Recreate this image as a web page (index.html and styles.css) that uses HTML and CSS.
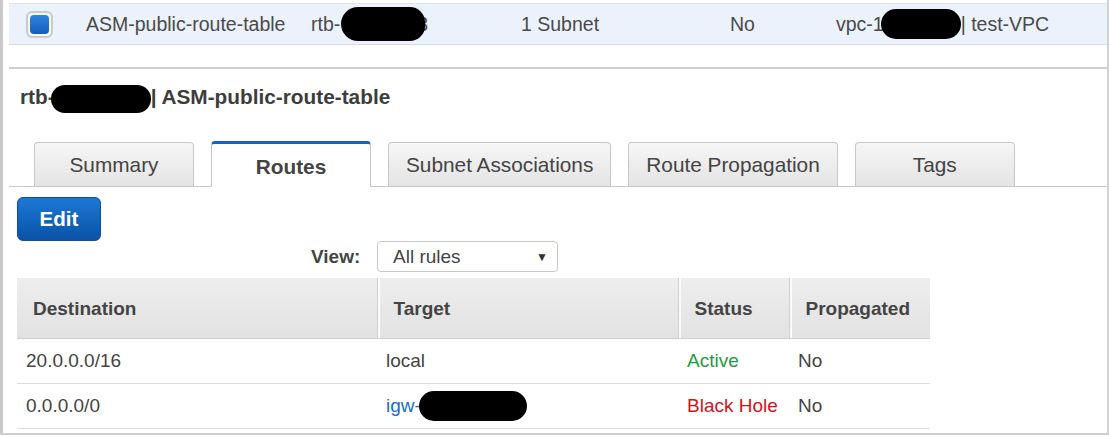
FILE: index.html
```html
<!DOCTYPE html>
<html>
<head>
<meta charset="utf-8">
<link rel="stylesheet" href="styles.css">
</head>
<body>
<div class="frame">
  <div class="list-row">
    <div class="cell cell-check"><span class="checkbox"><span class="checkbox-fill"></span></span></div>
    <div class="cell">ASM-public-route-table</div>
    <div class="cell">rtb-<span class="redact redact-rtb"></span><span class="peek">3</span></div>
    <div class="cell">1 Subnet</div>
    <div class="cell">No</div>
    <div class="cell">vpc-1<span class="redact redact-vpc"></span>| test-VPC</div>
  </div>
  <div class="splitter"></div>
  <section class="details">
    <h2 class="details-title">rtb-<span class="redact redact-title"></span>| ASM-public-route-table</h2>
    <div class="tabs">
      <div class="tab">Summary</div>
      <div class="tab tab-active">Routes</div>
      <div class="tab">Subnet Associations</div>
      <div class="tab">Route Propagation</div>
      <div class="tab">Tags</div>
    </div>
    <div class="actions"><button class="btn-edit">Edit</button></div>
    <div class="filter">
      <span class="filter-label">View:</span>
      <div class="select"><span>All rules</span><span class="caret">▼</span></div>
    </div>
    <table class="routes">
      <colgroup>
        <col class="col-dest"><col class="col-target"><col class="col-status"><col class="col-prop">
      </colgroup>
      <thead>
        <tr><th>Destination</th><th>Target</th><th>Status</th><th>Propagated</th></tr>
      </thead>
      <tbody>
        <tr><td>20.0.0.0/16</td><td>local</td><td class="ok">Active</td><td>No</td></tr>
        <tr><td>0.0.0.0/0</td><td><span class="link">igw-</span><span class="redact redact-igw"></span></td><td class="bad">Black Hole</td><td>No</td></tr>
      </tbody>
    </table>
  </section>
</div>
</body>
</html>
```
FILE: styles.css
```css
* { box-sizing: border-box; }
html, body { margin: 0; padding: 0; background: #fff; }
body {
  font-family: "Liberation Sans", Arial, sans-serif;
  color: #444;
  width: 1109px;
  height: 437px;
  overflow: hidden;
}
.frame {
  width: 1109px;
  height: 435px;
  border-left: 3px solid #c9c9c9;
  border-right: 2px solid #d2d2d2;
  border-bottom: 2px solid #cfcfcf;
  padding-left: 6px;
  padding-top: 3px;
}
.list-row {
  display: grid;
  grid-template-columns: 77px 225px 210px 209px 106px 1fr;
  height: 42px;
  background: #ebf2fc;
  border-top: 1px solid #dfe6ee;
  border-bottom: 1px solid #d6dce4;
  font-size: 19.5px;
  line-height: 40px;
  color: #4a4a4a;
  white-space: nowrap;
}
.cell { display: flex; align-items: center; }
.cell-check { padding-left: 17px; }
.checkbox {
  width: 27px; height: 27px;
  border: 2px solid #cacaca;
  border-radius: 6px;
  background: #f6f6f6;
  padding: 2px;
  display: block;
}
.checkbox-fill {
  display: block;
  width: 100%; height: 100%;
  border-radius: 4px;
  background: linear-gradient(#2f86de, #165dbb);
}
.redact {
  display: inline-block;
  background: #000;
  border-radius: 50%;
  vertical-align: middle;
}
.redact-rtb { width: 84px; height: 34px; margin-left: 1px; position: relative; z-index: 1; border-radius: 18px 16px 16px 18px; }
.peek { margin-left: -8px; }
.redact-vpc { width: 80px; height: 30px; margin-left: -3px; border-radius: 15px; }
.splitter { height: 2px; background: #cfcfcf; margin-top: 22px; }
.details-title {
  margin: 16px 0 0 11px;
  height: 24px;
  font-size: 20.8px;
  font-weight: bold;
  line-height: 24px;
  color: #3d3d3d;
  white-space: nowrap;
}
.redact-title { width: 100px; height: 28px; margin: -4px 0 -4px -4px; border-radius: 14px; }
.tabs {
  display: flex;
  align-items: flex-end;
  gap: 17px;
  padding-left: 25px;
  margin-top: 32px;
  border-bottom: 1px solid #c8c8c8;
}
.tab {
  min-width: 160px;
  height: 44px;
  padding: 0 17px;
  border: 1px solid #c8c8c8;
  border-bottom: none;
  border-radius: 4px 4px 0 0;
  background: linear-gradient(#f6f6f6, #e4e4e4);
  font-size: 20.8px;
  line-height: 43px;
  text-align: center;
  color: #444;
  white-space: nowrap;
}
.tab-active {
  height: 46px;
  margin-bottom: -1px;
  background: #fff;
  border-top: 3px solid #1565c0;
  font-weight: bold;
  line-height: 46px;
}
.actions { margin-top: 10px; padding-left: 8px; height: 44px; }
.btn-edit {
  width: 84px; height: 44px;
  border: 1px solid #0a4fa0;
  border-radius: 6px;
  background: linear-gradient(#1c78d6, #0a52a6);
  color: #fff;
  font-family: "Liberation Sans", Arial, sans-serif;
  font-size: 20.6px;
  font-weight: bold;
  padding: 0;
}
.filter {
  display: flex;
  align-items: center;
  height: 31px;
  padding-left: 302px;
  gap: 16px;
}
.filter-label { font-size: 19px; font-weight: bold; color: #444; width: 50px; }
.select {
  width: 181px; height: 31px;
  border: 1px solid #c8c8c8;
  border-radius: 4px;
  display: flex;
  align-items: center;
  justify-content: space-between;
  padding: 0 9px 0 15px;
  font-size: 19px;
  color: #444;
  background: #fff;
}
.caret { font-size: 12px; color: #333; }
.routes {
  margin: 6px 0 0 8px;
  width: 913px;
  border-collapse: collapse;
  table-layout: fixed;
  font-size: 19px;
}
.col-dest { width: 360px; }
.col-target { width: 301px; }
.col-status { width: 111px; }
.col-prop { width: 141px; }
.routes th {
  height: 60px;
  text-align: left;
  padding: 2px 0 0 16px;
  background: linear-gradient(#ededed, #e2e2e2);
  border-bottom: 1px solid #cdcdcd;
  font-weight: bold;
  color: #444;
}
.routes th + th {
  border-left: 1px solid #cfcfcf;
  box-shadow: inset 2px 0 0 #fafafa;
}
.routes td {
  height: 45px;
  padding: 1px 0 0 9px;
  border-bottom: 1px solid #dcdcdc;
  color: #444;
  white-space: nowrap;
}
.ok { color: #1d9c3f !important; }
.bad { color: #d2131b !important; }
.link { color: #1a6dc6; }
.redact-igw { width: 108px; height: 30px; margin: -4px 0 -4px -2px; border-radius: 15px; }
```
